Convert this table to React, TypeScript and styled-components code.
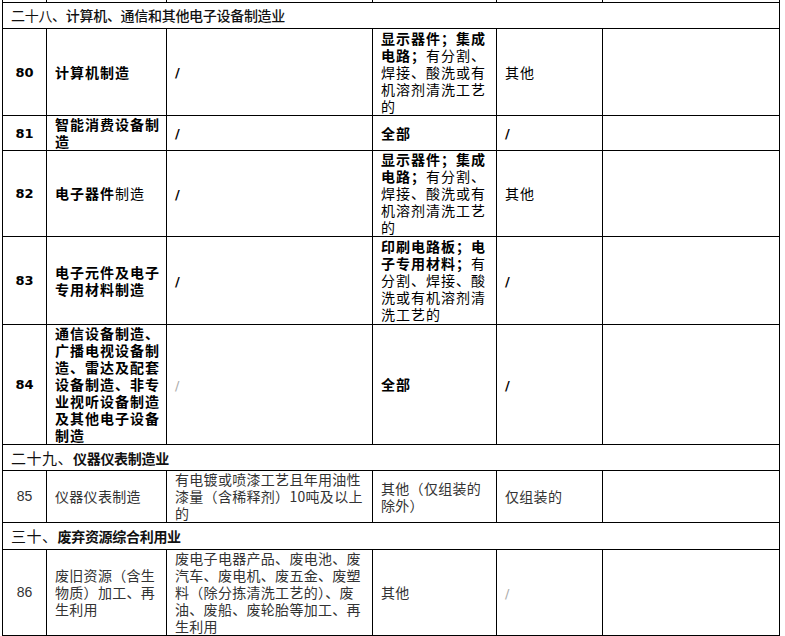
import styled, { createGlobalStyle } from 'styled-components';
import type { ReactNode } from 'react';

const GlobalStyle = createGlobalStyle`
  html, body {
    margin: 0;
    padding: 0;
    background: #fff;
  }
  body {
    font-family: "Noto Sans CJK SC", "Liberation Sans", sans-serif;
  }
`;

type Tone = 'strong' | 'plain';

const Sheet = styled.table`
  margin-left: 2px;
  width: 777px;
  border-collapse: collapse;
  table-layout: fixed;
  font-family: "Noto Sans CJK SC", "Liberation Sans", sans-serif;
  font-size: 14px;
  line-height: 17px;
  color: #000;
`;

const Col = styled.col<{ $w: number }>`
  width: ${p => p.$w}px;
`;

const Row = styled.tr<{ $h: number }>`
  height: ${p => p.$h}px;
`;

const StubCell = styled.td`
  height: 2px;
  padding: 0;
  border: 1px solid #000;
  border-top: none;
`;

const TailCell = styled.td`
  height: 6px;
  padding: 0;
  border: 1px solid #000;
  border-bottom: none;
`;

const Cell = styled.td<{ $tone: Tone }>`
  border: 1px solid #000;
  padding: 0 4px 0 8px;
  vertical-align: middle;
  text-align: left;
  white-space: nowrap;
  overflow: hidden;
  font-weight: ${p => (p.$tone === 'strong' ? 700 : 400)};
  letter-spacing: ${p => (p.$tone === 'strong' ? '1px' : '0.3px')};
  color: ${p => (p.$tone === 'strong' ? '#000' : '#333')};
`;

const NumCell = styled.td<{ $tone: Tone }>`
  border: 1px solid #000;
  padding: 0;
  text-align: center;
  vertical-align: middle;
  font-family: ${p => (p.$tone === 'strong' ? '"DejaVu Sans", sans-serif' : '"Liberation Sans", sans-serif')};
  font-size: ${p => (p.$tone === 'strong' ? '13px' : '14px')};
  font-weight: ${p => (p.$tone === 'strong' ? 700 : 400)};
  color: ${p => (p.$tone === 'strong' ? '#000' : '#333')};
`;

const SectionCell = styled.td`
  border: 1px solid #000;
  padding: 0 8px;
  vertical-align: middle;
  white-space: nowrap;
  font-size: 14px;
  color: #111;
`;

const SectionPrefix = styled.span<{ $big?: boolean }>`
  font-size: ${p => (p.$big ? '15px' : '14px')};
  font-weight: 400;
  letter-spacing: ${p => (p.$big ? '0.5px' : '-0.3px')};
`;

const SectionName = styled.span<{ $weight: number }>`
  font-weight: ${p => p.$weight};
  letter-spacing: -0.3px;
`;

const Light = styled.span`
  font-weight: 400;
`;

const Slash = styled.span<{ $faint?: boolean }>`
  font-family: "DejaVu Sans", sans-serif;
  font-size: 13px;
  font-weight: ${p => (p.$faint ? 400 : 700)};
  color: ${p => (p.$faint ? '#aaa' : '#000')};
  letter-spacing: 0;
`;

const widths = [44, 120, 206, 124, 106, 177];

type Item = {
  no: string;
  h: number;
  tone: Tone;
  cells: ReactNode[];
};

type Section = {
  h: number;
  prefix: string;
  name: string;
  big?: boolean;
  weight: number;
};

type Entry = { kind: 'item'; item: Item } | { kind: 'section'; section: Section };

const entries: Entry[] = [
  {
    kind: 'section',
    section: { h: 26, prefix: '二十八、', name: '计算机、通信和其他电子设备制造业', weight: 500 },
  },
  {
    kind: 'item',
    item: {
      no: '80',
      h: 87,
      tone: 'strong',
      cells: [
        '计算机制造',
        <Slash>/</Slash>,
        <>
          显示器件；集成<br />电路；<Light>有分割、<br />焊接、酸洗或有<br />机溶剂清洗工艺<br />的</Light>
        </>,
        <Light>其他</Light>,
        '',
      ],
    },
  },
  {
    kind: 'item',
    item: {
      no: '81',
      h: 35,
      tone: 'strong',
      cells: [
        <>智能消费设备制<br />造</>,
        <Slash>/</Slash>,
        '全部',
        <Slash>/</Slash>,
        '',
      ],
    },
  },
  {
    kind: 'item',
    item: {
      no: '82',
      h: 86,
      tone: 'strong',
      cells: [
        <>电子器件<Light>制造</Light></>,
        <Slash>/</Slash>,
        <>
          显示器件；集成<br />电路；<Light>有分割、<br />焊接、酸洗或有<br />机溶剂清洗工艺<br />的</Light>
        </>,
        <Light>其他</Light>,
        '',
      ],
    },
  },
  {
    kind: 'item',
    item: {
      no: '83',
      h: 88,
      tone: 'strong',
      cells: [
        <>电子元件及电子<br />专用材料制造</>,
        <Slash>/</Slash>,
        <>
          印刷电路板；电<br />子专用材料；<Light>有<br />分割、焊接、酸<br />洗或有机溶剂清<br />洗工艺的</Light>
        </>,
        <Slash>/</Slash>,
        '',
      ],
    },
  },
  {
    kind: 'item',
    item: {
      no: '84',
      h: 120,
      tone: 'strong',
      cells: [
        <>
          通信设备制造、<br />广播电视设备制<br />造、雷达及配套<br />设备制造、非专<br />业视听设备制造<br />及其他电子设备<br />制造
        </>,
        <Slash $faint>/</Slash>,
        '全部',
        <Slash>/</Slash>,
        '',
      ],
    },
  },
  {
    kind: 'section',
    section: { h: 26, prefix: '二十九、', name: '仪器仪表制造业', big: true, weight: 700 },
  },
  {
    kind: 'item',
    item: {
      no: '85',
      h: 51,
      tone: 'plain',
      cells: [
        '仪器仪表制造',
        <>有电镀或喷漆工艺且年用油性<br />漆量（含稀释剂）10吨及以上<br />的</>,
        <>其他（仅组装的<br />除外）</>,
        '仅组装的',
        '',
      ],
    },
  },
  {
    kind: 'section',
    section: { h: 27, prefix: '三十、', name: '废弃资源综合利用业', big: true, weight: 700 },
  },
  {
    kind: 'item',
    item: {
      no: '86',
      h: 84,
      tone: 'plain',
      cells: [
        <>废旧资源（含生<br />物质）加工、再<br />生利用</>,
        <>
          废电子电器产品、废电池、废<br />汽车、废电机、废五金、废塑<br />料（除分拣清洗工艺的）、废<br />油、废船、废轮胎等加工、再<br />生利用
        </>,
        '其他',
        <Slash $faint>/</Slash>,
        '',
      ],
    },
  },
];

function ItemRow({ item }: { item: Item }) {
  return (
    <Row $h={item.h}>
      <NumCell $tone={item.tone}>{item.no}</NumCell>
      {item.cells.map((c, i) => (
        <Cell key={i} $tone={item.tone}>
          {c}
        </Cell>
      ))}
    </Row>
  );
}

function SectionRow({ section }: { section: Section }) {
  return (
    <Row $h={section.h}>
      <SectionCell colSpan={6}>
        <SectionPrefix $big={section.big}>{section.prefix}</SectionPrefix>
        <SectionName $weight={section.weight}>{section.name}</SectionName>
      </SectionCell>
    </Row>
  );
}

export default function App() {
  return (
    <>
      <GlobalStyle />
      <Sheet>
        <colgroup>
          {widths.map((w, i) => (
            <Col key={i} $w={w} />
          ))}
        </colgroup>
        <tbody>
          <tr>
            {widths.map((_, i) => (
              <StubCell key={i} />
            ))}
          </tr>
          {entries.map((e, i) =>
            e.kind === 'item' ? (
              <ItemRow key={i} item={e.item} />
            ) : (
              <SectionRow key={i} section={e.section} />
            )
          )}
          <tr>
            <TailCell colSpan={6} />
          </tr>
        </tbody>
      </Sheet>
    </>
  );
}
